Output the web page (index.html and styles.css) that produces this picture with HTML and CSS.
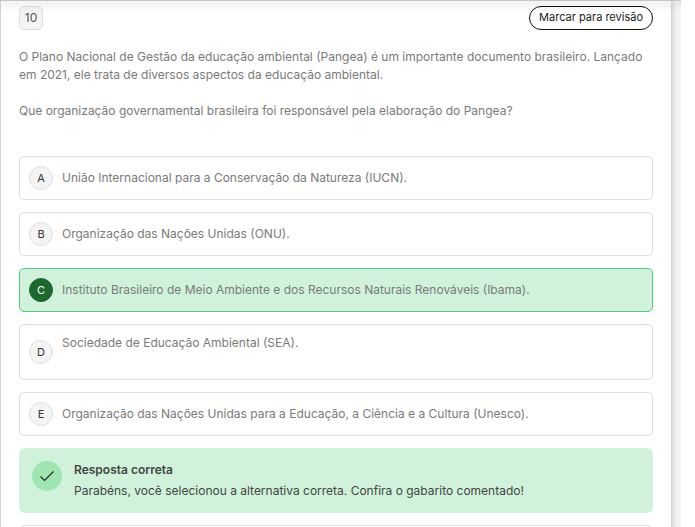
FILE: index.html
```html
<!DOCTYPE html>
<html lang="pt-BR">
<head>
  <meta charset="UTF-8">
  <meta name="viewport" content="width=device-width, initial-scale=1.0">
  <title>Questão 10</title>
  <link rel="stylesheet" href="styles.css">
</head>
<body>
  <div class="page">
    <div class="topbar"></div>
    <main class="question">
      <div class="question-header">
        <span class="question-number">10</span>
        <button type="button" class="review-button">Marcar para revisão</button>
      </div>

      <div class="statement">
        <p>O Plano Nacional de Gestão da educação ambiental (Pangea) é um importante documento brasileiro. Lançado em 2021, ele trata de diversos aspectos da educação ambiental.</p>
        <p>Que organização governamental brasileira foi responsável pela elaboração do Pangea?</p>
      </div>

      <form class="options">
        <label class="option">
          <span class="marker"><input type="radio" name="answer" value="A"><span class="letter">A</span></span>
          <span class="option-text">União Internacional para a Conservação da Natureza (IUCN).</span>
        </label>
        <label class="option">
          <span class="marker"><input type="radio" name="answer" value="B"><span class="letter">B</span></span>
          <span class="option-text">Organização das Nações Unidas (ONU).</span>
        </label>
        <label class="option correct">
          <span class="marker"><input type="radio" name="answer" value="C" checked><span class="letter">C</span></span>
          <span class="option-text">Instituto Brasileiro de Meio Ambiente e dos Recursos Naturais Renováveis (Ibama).</span>
        </label>
        <label class="option">
          <span class="marker"><input type="radio" name="answer" value="D"><span class="letter">D</span></span>
          <span class="option-text">Sociedade de Educação Ambiental (SEA).<br><br></span>
        </label>
        <label class="option">
          <span class="marker"><input type="radio" name="answer" value="E"><span class="letter">E</span></span>
          <span class="option-text">Organização das Nações Unidas para a Educação, a Ciência e a Cultura (Unesco).</span>
        </label>
      </form>

      <div class="feedback">
        <span class="feedback-icon">
          <svg width="16" height="16" viewBox="0 0 16 16" fill="none" stroke="#1f2a22" stroke-width="1.2">
            <path d="M1.5 8.5 L5.5 12.5 L14.5 3.5"/>
          </svg>
        </span>
        <div class="feedback-body">
          <strong>Resposta correta</strong>
          <p>Parabéns, você selecionou a alternativa correta. Confira o gabarito comentado!</p>
        </div>
      </div>

      <!-- Commented answer -->
      <section class="comment"></section>
    </main>
  </div>
</body>
</html>
```
FILE: styles.css
```css
* {
  box-sizing: border-box;
}

body {
  margin: 0;
  background-color: #fff;
  color: #7a7a7a;
  font-family: 'Inter', 'Liberation Sans', sans-serif;
  font-size: 12px;
  font-weight: 400;
  line-height: 18px;
}

p {
  margin: 0;
}

.page {
  display: flex;
  flex-direction: column;
  height: 100vh;
  margin-right: 14px;
  padding-right: 10px;
  background-color: #f4f4f4;
  overflow: hidden;
}

.topbar {
  flex: none;
  height: 1px;
  margin-right: -10px;
  background-color: #c3c7c5;
  box-shadow: 0 2px 8px rgba(0, 0, 0, 0.5);
  z-index: 1;
}

.question {
  flex: 1 0 auto;
  padding: 5px 18px 18px;
  background-color: #fff;
  border-left: 1px solid #d4d4d4;
  box-shadow: 0 0 6px rgba(0, 0, 0, 0.3);
}

.question-header {
  display: flex;
  justify-content: space-between;
  align-items: center;
  margin-bottom: 18px;
}

.question-number {
  min-width: 24px;
  height: 24px;
  background-color: #f4f4f4;
  border: 1px solid #dedede;
  border-radius: 5px;
  color: #555;
  line-height: 22px;
  text-align: center;
}

.review-button {
  height: 24px;
  padding: 0 9px 2px;
  background-color: #fff;
  border: 1px solid #111;
  border-radius: 12px;
  color: #222;
  font-family: inherit;
  font-size: 11px;
  cursor: pointer;
}

.statement {
  display: grid;
  gap: 18px;
  margin-bottom: 36px;
}

.options {
  display: grid;
  gap: 12px;
  margin-bottom: 12px;
}

.option {
  display: flex;
  align-items: center;
  gap: 9px;
  min-height: 44px;
  padding: 9px;
  border: 1px solid #dedede;
  border-radius: 5px;
  cursor: pointer;
}

/* The letter sits on top of the round radio button */
.marker {
  display: grid;
  flex: none;
  place-items: center;
}

.marker > * {
  grid-area: 1 / 1;
}

.marker input {
  appearance: none;
  width: 24px;
  height: 24px;
  margin: 0;
  background-color: #f4f4f4;
  border: 1px solid #dedede;
  border-radius: 50%;
}

.marker input:checked {
  background-color: #1d692d;
  border-color: #1d692d;
}

.letter {
  color: #333;
  font-size: 11px;
}

.option.correct {
  background-color: #d0f2da;
  border-color: #4fcb71;
}

.correct .letter {
  color: #fff;
}

.feedback {
  display: flex;
  gap: 12px;
  padding: 13px;
  background-color: #d0f2da;
  border-radius: 6px;
  color: #444;
}

.feedback-icon {
  display: flex;
  flex: none;
  align-items: center;
  justify-content: center;
  width: 30px;
  height: 30px;
  background-color: #9fe5b1;
  border-radius: 50%;
}

.feedback-body {
  display: grid;
  gap: 3px;
}

.feedback-body strong {
  font-weight: 600;
}

.comment {
  min-height: 44px;
  margin-top: 12px;
  border: 1px solid #dedede;
  border-radius: 6px;
}
```
